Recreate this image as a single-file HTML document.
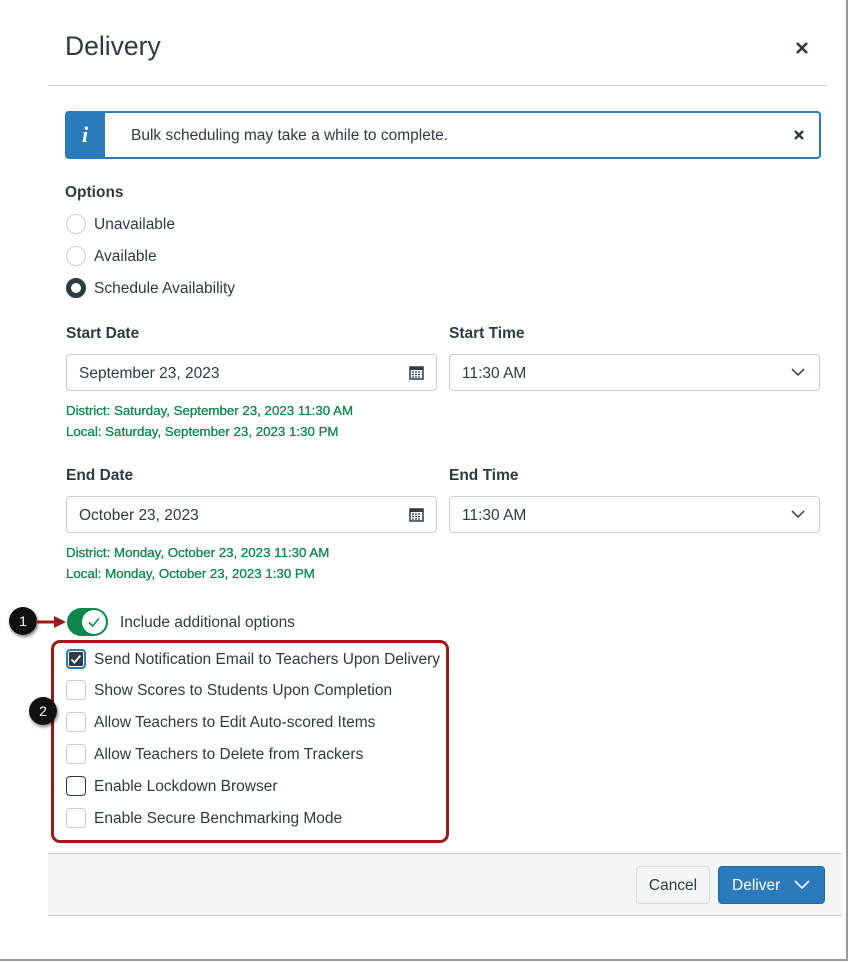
<!DOCTYPE html>
<html><head><meta charset="utf-8"><style>
*{box-sizing:border-box;margin:0;padding:0}
body{width:849px;height:963px;background:#fff;font-family:"Liberation Sans",sans-serif;color:#2d3b45;position:relative;overflow:hidden}
.a{position:absolute;white-space:nowrap}
.frame{position:absolute;left:0;top:0;width:848px;height:961px;border-right:2px solid #9a9a9a;border-bottom:2px solid #9a9a9a}
.t16{font-size:15.5px;line-height:22px}
.b{font-weight:bold}
.radio{position:absolute;width:20px;height:20px;border:1px solid #c7cdd1;border-radius:50%;background:#fff}
.cb{position:absolute;width:20px;height:20px;border:1px solid #c7cdd1;border-radius:4px;background:#fff}
.inp{position:absolute;height:37px;border:1px solid #c7cdd1;border-radius:4px;background:#fff;font-size:15.5px;line-height:37px;padding-left:12px}
.green{color:#0b874b;font-size:13.3px;line-height:16px;-webkit-text-stroke:0.3px #0b874b}
.call{position:absolute;width:28px;height:28px;border-radius:50%;background:#111;color:#fff;font-size:14px;text-align:center;line-height:28px;box-shadow:1px 2px 3px rgba(0,0,0,.5)}
</style></head><body>
<div class="frame"></div>
<div class="a" style="left:65px;top:30px;font-size:26.5px;line-height:32px">Delivery</div>
<svg class="a" style="left:795px;top:41px" width="14" height="14" viewBox="0 0 14 14"><path d="M2 2L12 12M12 2L2 12" stroke="#2d3b45" stroke-width="2.6"/></svg>
<div class="a" style="left:48px;top:85px;width:778px;height:1px;background:#c7cdd1"></div>

<div class="a" style="left:65px;top:111px;width:756px;height:48px;border:2px solid #2b7abc;border-radius:4px;background:#fff"></div>
<div class="a" style="left:65px;top:111px;width:40px;height:48px;background:#2b7abc;border-radius:4px 0 0 4px;color:#fff;font-family:'Liberation Serif',serif;font-style:italic;font-weight:bold;font-size:22px;text-align:center;line-height:48px">i</div>
<div class="a t16" style="left:131px;top:125px">Bulk scheduling may take a while to complete.</div>
<svg class="a" style="left:793px;top:129px" width="12" height="12" viewBox="0 0 12 12"><path d="M2 2L10 10M10 2L2 10" stroke="#2d3b45" stroke-width="2.4"/></svg>

<div class="a t16 b" style="left:65px;top:182px">Options</div>
<div class="radio" style="left:66px;top:214px"></div><div class="a t16" style="left:94px;top:214px">Unavailable</div>
<div class="radio" style="left:66px;top:246px"></div><div class="a t16" style="left:94px;top:246px">Available</div>
<div class="radio" style="left:66px;top:278px;border:5px solid #2d3b45"></div><div class="a t16" style="left:94px;top:278px">Schedule Availability</div>

<div class="a t16 b" style="left:66px;top:323px">Start Date</div>
<div class="a t16 b" style="left:449px;top:323px">Start Time</div>
<div class="inp" style="left:66px;top:354px;width:371px">September 23, 2023</div>
<div class="inp" style="left:449px;top:354px;width:371px">11:30 AM</div>
<div class="a green" style="left:66px;top:403px">District: Saturday, September 23, 2023 11:30 AM</div>
<div class="a green" style="left:66px;top:424px">Local: Saturday, September 23, 2023 1:30 PM</div>

<div class="a t16 b" style="left:66px;top:465px">End Date</div>
<div class="a t16 b" style="left:449px;top:465px">End Time</div>
<div class="inp" style="left:66px;top:496px;width:371px">October 23, 2023</div>
<div class="inp" style="left:449px;top:496px;width:371px">11:30 AM</div>
<div class="a green" style="left:66px;top:545px">District: Monday, October 23, 2023 11:30 AM</div>
<div class="a green" style="left:66px;top:566px">Local: Monday, October 23, 2023 1:30 PM</div>

<svg class="a" style="left:409px;top:365px" width="15" height="15" viewBox="0 0 15 15"><rect x="1" y="2" width="13" height="12" fill="none" stroke="#2d3b45" stroke-width="1.5"/><rect x="1" y="2" width="13" height="3" fill="#2d3b45"/><path d="M3 7h9M3 9.5h9M3 12h9" stroke="#2d3b45" stroke-width="1.2" stroke-dasharray="2 1"/></svg>
<svg class="a" style="left:409px;top:507px" width="15" height="15" viewBox="0 0 15 15"><rect x="1" y="2" width="13" height="12" fill="none" stroke="#2d3b45" stroke-width="1.5"/><rect x="1" y="2" width="13" height="3" fill="#2d3b45"/><path d="M3 7h9M3 9.5h9M3 12h9" stroke="#2d3b45" stroke-width="1.2" stroke-dasharray="2 1"/></svg>
<svg class="a" style="left:791px;top:368px" width="14" height="9" viewBox="0 0 14 9"><path d="M1 1L7 7L13 1" fill="none" stroke="#2d3b45" stroke-width="1.5"/></svg>
<svg class="a" style="left:791px;top:510px" width="14" height="9" viewBox="0 0 14 9"><path d="M1 1L7 7L13 1" fill="none" stroke="#2d3b45" stroke-width="1.5"/></svg>

<div class="a" style="left:67px;top:608px;width:41px;height:28px;border-radius:14px;background:#0b874b"></div>
<div class="a" style="left:82px;top:610px;width:24px;height:24px;border-radius:50%;background:#fff"></div>
<svg class="a" style="left:87px;top:615px" width="14" height="14" viewBox="0 0 14 14"><path d="M2 7.5L5.5 11L12 3.5" fill="none" stroke="#0b874b" stroke-width="1.6"/></svg>
<div class="a t16" style="left:120px;top:612px">Include additional options</div>
<div class="call" style="left:9px;top:607px">1</div>
<svg class="a" style="left:36px;top:614px" width="32" height="16" viewBox="0 0 32 16"><path d="M0 8H20" stroke="#9b1b1b" stroke-width="3"/><path d="M18 2L30 8L18 14Z" fill="#9b1b1b"/></svg>

<div class="a" style="left:51px;top:640px;width:398px;height:203px;border:3px solid #9b1b1b;border-radius:9px"></div>
<div class="call" style="left:29px;top:697px">2</div>

<div class="cb" style="left:66px;top:649px;background:#2d3b45;border:2px solid #2b7abc;box-shadow:0 0 0 1px #fff inset"></div>
<svg class="a" style="left:69px;top:652px" width="14" height="14" viewBox="0 0 14 14"><path d="M2.5 7.5L5.5 10.5L11.5 3.5" fill="none" stroke="#fff" stroke-width="1.8"/></svg>
<div class="a t16" style="left:94px;top:649px">Send Notification Email to Teachers Upon Delivery</div>
<div class="cb" style="left:66px;top:680px"></div><div class="a t16" style="left:94px;top:680px">Show Scores to Students Upon Completion</div>
<div class="cb" style="left:66px;top:712px"></div><div class="a t16" style="left:94px;top:712px">Allow Teachers to Edit Auto-scored Items</div>
<div class="cb" style="left:66px;top:744px"></div><div class="a t16" style="left:94px;top:744px">Allow Teachers to Delete from Trackers</div>
<div class="cb" style="left:66px;top:776px;border-color:#2d3b45"></div><div class="a t16" style="left:94px;top:776px">Enable Lockdown Browser</div>
<div class="cb" style="left:66px;top:808px"></div><div class="a t16" style="left:94px;top:808px">Enable Secure Benchmarking Mode</div>

<div class="a" style="left:48px;top:853px;width:794px;height:63px;background:#f5f5f5;border-top:1px solid #c7cdd1;border-bottom:1px solid #c7cdd1"></div>
<div class="a t16" style="left:636px;top:866px;width:74px;height:38px;border:1px solid #d7dadc;border-radius:4px;background:#f5f5f5;text-align:center;line-height:38px">Cancel</div>
<div class="a t16" style="left:718px;top:866px;width:107px;height:38px;border:1px solid #1e6aa5;border-radius:4px;background:#2b7abc;color:#fff;line-height:38px;padding-left:13px">Deliver</div>
<svg class="a" style="left:794px;top:880px" width="16" height="10" viewBox="0 0 16 10"><path d="M1 1L8 8L15 1" fill="none" stroke="#fff" stroke-width="1.6"/></svg>
</body></html>
